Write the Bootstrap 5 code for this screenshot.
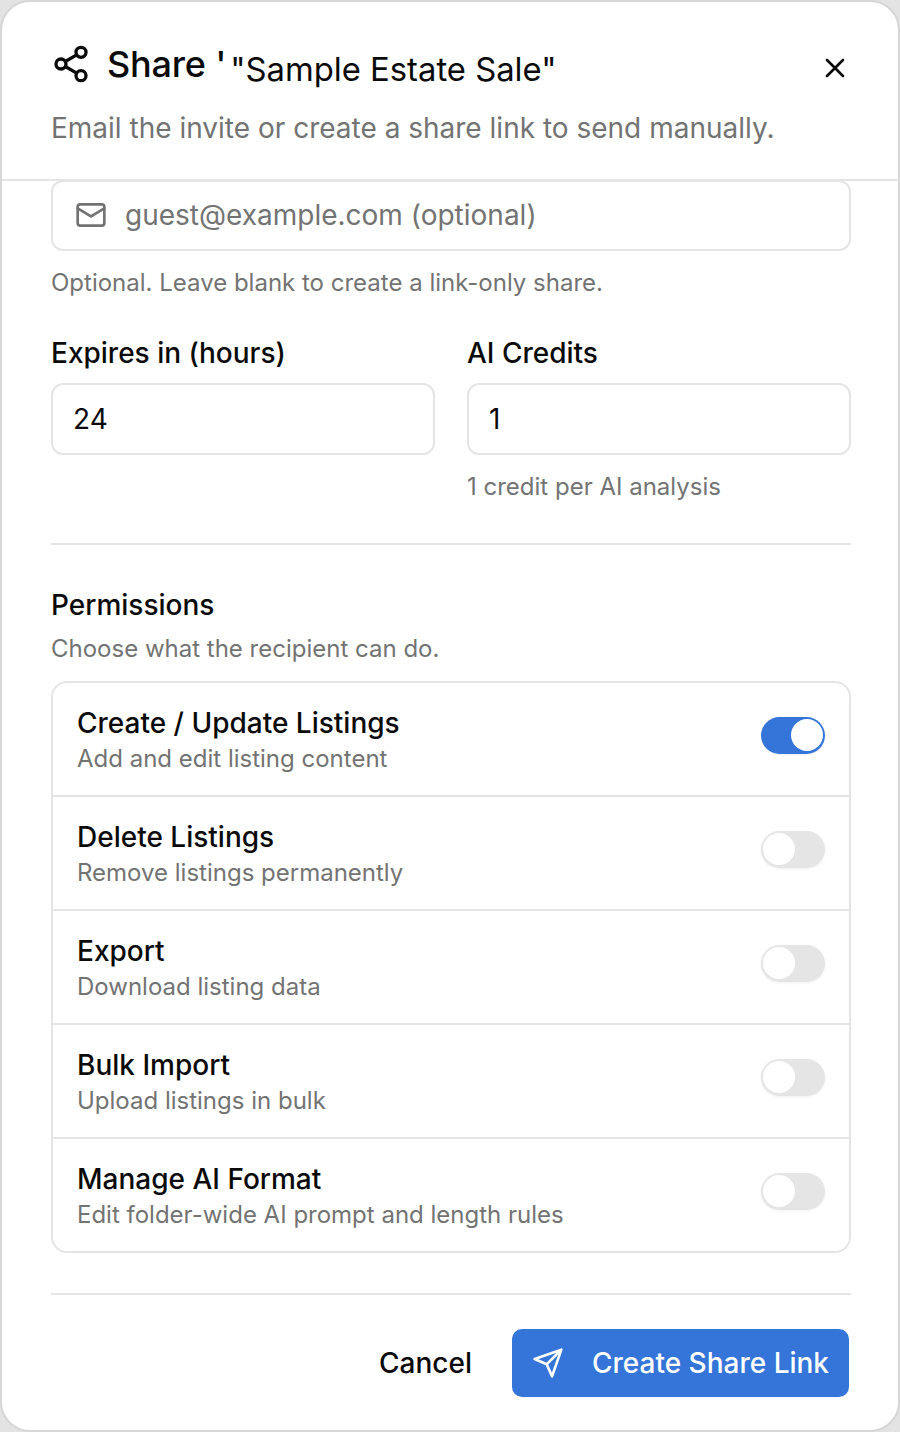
<!DOCTYPE html>
<html lang="en"><head><meta charset="utf-8"><title>Share</title>
<link href="https://cdn.jsdelivr.net/npm/bootstrap@5.3.0/dist/css/bootstrap.min.css" rel="stylesheet">
<style>
html,body{height:100%;}
body{background:#e3e3e3;font-family:Inter,"Liberation Sans",sans-serif;color:#0a0a0a;}
.share-shell{height:1432px;background:#fff;border:2px solid #d6d6d6;border-radius:30px;overflow:hidden;}
.share-head{height:179px;padding:40px 47px 0 49px;border-bottom:2px solid #e5e5e5;}
.share-icon{margin:1.5px 16px 0 0;}
.title-word{font-size:36px;font-weight:500;line-height:44px;letter-spacing:-.2px;}
.title-name{font-size:32.8px;font-weight:400;line-height:44px;margin:5px 0 0 4px;}
.sub-line{font-size:28px;line-height:40px;color:#737373;margin:17px 0 0;}
.close-x{background:none;border:0;padding:0;width:36px;height:36px;margin-top:8px;margin-right:-2px;}
.share-body{padding:0 47px 0 49px;}
.field-box{border:2px solid #e5e5e5;border-radius:12px;height:72px;background:#fff;}
.email-box{height:71px;margin-top:-1px;padding:0 0 2px 22px;font-size:28px;color:#737373;gap:18px;}
.field-box.num{padding-left:20px;font-size:28px;display:flex;align-items:center;margin-top:12px;}
.hint{font-size:24px;line-height:32px;color:#737373;margin:16px 0 0;}
.lab{font-size:28px;font-weight:500;line-height:36px;margin:0;}
.two-cols{column-gap:32px;margin-top:36px;}
.rule-line{border:0;border-top:2px solid #e5e5e5;opacity:1;margin:0;}
.rule-a{margin-top:40px;}
.perm-head{margin-top:42px;}
.choose-hint{margin-top:10px;}
.rule-b{margin-top:40px;}
.perm-list{border:2px solid #e5e5e5;border-radius:16px;overflow:hidden;margin-top:16px;}
.perm-row{height:114px;padding:3px 24px 0;border-bottom:2px solid #e5e5e5;}
.perm-row:last-child{border-bottom:0;height:112px;}
.perm-name{font-size:28px;font-weight:500;line-height:36px;}
.perm-desc{font-size:24px;line-height:34px;color:#737373;margin-top:1px;}
.sw{width:64px;height:37px;border-radius:19px;background:#e5e5e5;position:relative;flex:none;box-shadow:0 1px 3px rgba(0,0,0,.06);margin-top:-11px;}
.sw::after{content:"";position:absolute;width:32px;height:32px;border-radius:50%;background:#fff;left:2px;top:2.5px;}
.sw.on{background:#3574d9;}
.sw.on::after{left:30px;}
.foot-row{gap:40px;margin-top:34px;margin-right:2px;}
.act-cancel{background:none;border:0;font-size:28px;font-weight:500;color:#0a0a0a;padding:0;}
.act-go{background:#3574d9;color:#fff;border:0;border-radius:10px;height:68px;width:337px;font-size:28px;font-weight:500;padding:0;gap:28px;}
</style></head><body>
<div class="share-shell d-flex flex-column">
 <header class="share-head">
  <div class="d-flex justify-content-between align-items-start">
   <div class="d-flex align-items-start">
    <svg class="share-icon" width="40" height="40" viewBox="0 0 24 24" fill="none" stroke="#0a0a0a" stroke-width="2" stroke-linecap="round" stroke-linejoin="round"><circle cx="18" cy="5" r="3"/><circle cx="6" cy="12" r="3"/><circle cx="18" cy="19" r="3"/><line x1="8.59" y1="13.51" x2="15.42" y2="17.49"/><line x1="15.41" y1="6.51" x2="8.59" y2="10.49"/></svg>
    <span class="title-word">Share '</span><span class="title-name">"Sample Estate Sale"</span>
   </div>
   <button class="close-x" aria-label="Close"><svg width="36" height="36" viewBox="0 0 36 36" fill="none" stroke="#0a0a0a" stroke-width="2.6" stroke-linecap="round"><path d="M10 10 26 26M26 10 10 26"/></svg></button>
  </div>
  <p class="sub-line">Email the invite or create a share link to send manually.</p>
 </header>
 <main class="share-body flex-grow-1">
  <div class="field-box email-box d-flex align-items-center">
   <svg width="32" height="32" viewBox="0 0 24 24" fill="none" stroke="#737373" stroke-width="2" stroke-linecap="round" stroke-linejoin="round"><rect x="2" y="4" width="20" height="16" rx="2"/><path d="m22 7-10 6L2 7"/></svg>
   <span>guest@example.com (optional)</span>
  </div>
  <p class="hint">Optional. Leave blank to create a link-only share.</p>
  <div class="row g-0 two-cols">
   <div class="col"><p class="lab">Expires in (hours)</p><div class="field-box num">24</div></div>
   <div class="col"><p class="lab">AI Credits</p><div class="field-box num">1</div><p class="hint">1 credit per AI analysis</p></div>
  </div>
  <hr class="rule-line rule-a">
  <p class="lab perm-head">Permissions</p>
  <p class="hint choose-hint">Choose what the recipient can do.</p>
  <div class="perm-list">
   <div class="perm-row d-flex align-items-center justify-content-between"><div><div class="perm-name">Create / Update Listings</div><div class="perm-desc">Add and edit listing content</div></div><span class="sw on"></span></div>
   <div class="perm-row d-flex align-items-center justify-content-between"><div><div class="perm-name">Delete Listings</div><div class="perm-desc">Remove listings permanently</div></div><span class="sw"></span></div>
   <div class="perm-row d-flex align-items-center justify-content-between"><div><div class="perm-name">Export</div><div class="perm-desc">Download listing data</div></div><span class="sw"></span></div>
   <div class="perm-row d-flex align-items-center justify-content-between"><div><div class="perm-name">Bulk Import</div><div class="perm-desc">Upload listings in bulk</div></div><span class="sw"></span></div>
   <div class="perm-row d-flex align-items-center justify-content-between"><div><div class="perm-name">Manage AI Format</div><div class="perm-desc">Edit folder-wide AI prompt and length rules</div></div><span class="sw"></span></div>
  </div>
  <hr class="rule-line rule-b">
  <div class="d-flex justify-content-end align-items-center foot-row">
   <button class="act-cancel">Cancel</button>
   <button class="act-go d-flex align-items-center justify-content-center"><svg width="32" height="32" viewBox="0 0 24 24" fill="none" stroke="#fff" stroke-width="2" stroke-linecap="round" stroke-linejoin="round"><path d="M22 2 11 13M22 2l-7 20-4-9-9-4Z"/></svg><span>Create Share Link</span></button>
  </div>
 </main>
</div>
</body></html>
